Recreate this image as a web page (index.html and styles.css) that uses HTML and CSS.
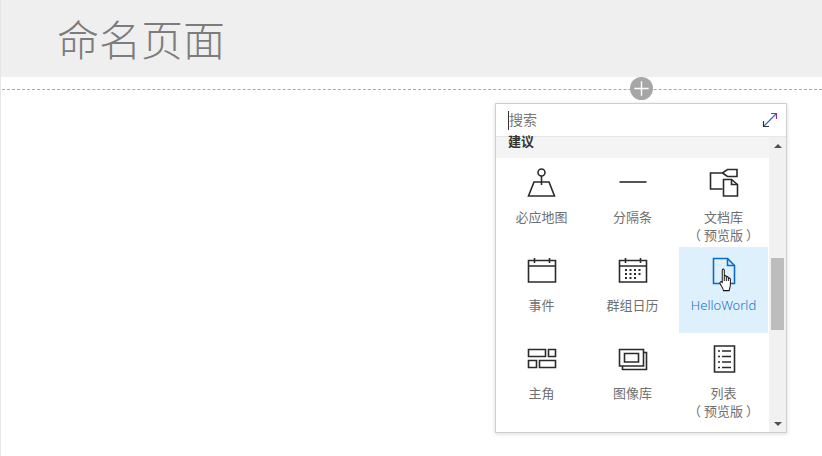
FILE: index.html
```html
<!DOCTYPE html>
<html lang="zh-CN">
<head>
    <meta charset="UTF-8">
    <meta name="viewport" content="width=device-width, initial-scale=1.0">
    <title>命名页面</title>
    <link rel="stylesheet" href="styles.css">
</head>
<body>
    <div class="page">
        <header class="page-header">
            <h1>命名页面</h1>
        </header>
        <div class="divider"></div>
    </div>

    <button class="add-btn" aria-label="添加">
        <svg width="24" height="24" viewBox="0 0 24 24"><path d="M12 4.500v15M4.500 12h15"/></svg>
    </button>

    <div class="picker">
        <div class="picker-search">
            <span class="caret"></span>
            <span class="search-text">搜索</span>
            <svg class="expand" width="16" height="16" viewBox="0 0 16 16">
                <path class="ic-blue" d="M1.500 14.500 14.500 1.500"/>
                <path class="ic-purple" d="M9 1.500h5.500V7"/>
                <path class="ic" d="M1.500 9v5.500H7"/>
            </svg>
        </div>
        <div class="picker-body">
            <div class="picker-list">
                <div class="section-title">建议</div>
                <div class="grid">
                    <div class="cell">
                        <svg class="icon" width="32" height="32" viewBox="0 0 32 32">
                            <circle cx="15.500" cy="6.500" r="3.500"/>
                            <path d="M15.500 10V19M8 16h15L28.500 30H2.500z"/>
                        </svg>
                        <span>必应地图</span>
                    </div>
                    <div class="cell">
                        <svg class="icon" width="32" height="32" viewBox="0 0 32 32">
                            <path d="M2.500 16h27"/>
                        </svg>
                        <span>分隔条</span>
                    </div>
                    <div class="cell">
                        <svg class="icon" width="32" height="32" viewBox="0 0 32 32">
                            <path d="M14.500 23H2.500V7h12l5-3.500H29v7H19.500l-5-3.500"/>
                            <path d="M15.500 13.500h8l6 5V30h-14z"/>
                            <path d="M23.500 13.500v5h6"/>
                        </svg>
                        <span class="two-line">文档库<br>（ 预览版 ）</span>
                    </div>
                    <div class="cell cell-mid">
                        <svg class="icon" width="32" height="32" viewBox="0 0 32 32">
                            <path d="M2.500 5.500h27v21.500h-27zM2.500 11h27M8.500 3v5M23.500 3v5"/>
                        </svg>
                        <span>事件</span>
                    </div>
                    <div class="cell cell-mid">
                        <svg class="icon" width="32" height="32" viewBox="0 0 32 32">
                            <path d="M2.500 5.500h27v21.500h-27zM2.500 11h27M8.500 3v5M23.500 3v5"/>
                            <path class="dots" d="M8 15h17M8 19h17M8 23h12"/>
                        </svg>
                        <span>群组日历</span>
                    </div>
                    <div class="cell cell-mid cell-active">
                        <svg class="icon" width="32" height="32" viewBox="0 0 32 32">
                            <path d="M5.500 3.500h14l7 7v18h-21z"/>
                            <path d="M19.500 3.500v7h7"/>
                        </svg>
                        <span>HelloWorld</span>
                        <svg class="hand" width="13" height="24" viewBox="0 0 16 25" preserveAspectRatio="none">
                            <path d="M4 2.500c0-2 2.500-2 2.500 0V9c.3-1.500 2.500-1.500 2.500 0v1c.3-1.300 2.400-1.300 2.500.2v1c.4-1 2.500-1 2.500.6V17c0 3-1 4-1.500 6.500H5.500C5 21 3 19 1.500 16.500c-1-1.800.8-3.200 2.500-1.500z"/>
                            <path d="M6.500 9v4.500M9 10v3.500M11.500 11v2.500"/>
                        </svg>
                    </div>
                    <div class="cell cell-low">
                        <svg class="icon" width="32" height="32" viewBox="0 0 32 32">
                            <path d="M2.500 8.500h17v7h-17zM22.500 8.500h7v7h-7zM2.500 19.500h8v7h-8zM13.500 19.500h16v7h-16z"/>
                        </svg>
                        <span>主角</span>
                    </div>
                    <div class="cell cell-low">
                        <svg class="icon" width="32" height="32" viewBox="0 0 32 32">
                            <path d="M2.500 8.500h24v16.500h-24zM7.500 12.500h14v8.500h-14z"/>
                            <path d="M26.500 11.500h3v17h-24v-3.500"/>
                        </svg>
                        <span>图像库</span>
                    </div>
                    <div class="cell cell-low">
                        <svg class="icon" width="32" height="32" viewBox="0 0 32 32">
                            <path d="M6.500 5h20v26h-20z"/>
                            <path d="M10 10h2M14 10h9M10 15.500h2M14 15.500h9M10 21h2M14 21h9M10 26.500h2M14 26.500h9"/>
                        </svg>
                        <span class="two-line">列表<br>（ 预览版 ）</span>
                    </div>
                </div>
            </div>
            <div class="scrollbar">
                <span class="arrow arrow-up"></span>
                <div class="track"><div class="thumb"></div></div>
                <span class="arrow arrow-down"></span>
            </div>
        </div>
    </div>
</body>
</html>
```

FILE: styles.css
```css
body {
    margin: 0;
    height: 456px;
    overflow: hidden;
    background: white;
    font-family: "Noto Sans CJK SC", "Noto Sans", sans-serif;
}
.page {
    height: 456px;
    border-left: 1px solid #e6e6e6;
}
.page-header {
    height: 77px;
    background-color: #efefef;
    padding-left: 56px;
}
.page-header h1 {
    margin: 0;
    font-size: 42px;
    font-weight: 300;
    line-height: 75px;
    color: #7c7c7c;
}
.divider {
    margin: 12px 0 0 1px;
    border-top: 1px dashed #aaa;
}
.add-btn {
    position: absolute;
    left: 630px;
    top: 77px;
    width: 23px;
    height: 23px;
    padding: 0;
    border: none;
    border-radius: 50%;
    background-color: #a6a6a6;
}
.add-btn svg {
    display: block;
    width: 23px;
    height: 23px;
    fill: none;
    stroke: white;
    stroke-width: 1.5;
}

.picker {
    position: absolute;
    left: 495px;
    top: 103px;
    width: 290px;
    height: 328px;
    border: 1px solid #cfcfcf;
    background: white;
    box-shadow: 0 1px 4px rgba(0,0,0,0.15);
    display: flex;
    flex-direction: column;
}
.picker-search {
    height: 32px;
    flex: none;
    display: flex;
    align-items: center;
    padding: 0 8px 0 12px;
    border-bottom: 1px solid #e6e6e6;
}
.caret {
    width: 1px;
    height: 19px;
    background-color: #333;
}
.search-text {
    font-size: 14px;
    line-height: 18px;
    margin-top: -2px;
    color: #777;
}
.expand {
    margin-left: auto;
    fill: none;
    stroke-width: 1.2;
}
.ic { stroke: #333; }
.ic-blue { stroke: #3a6fb5; }
.ic-purple { stroke: #8a2f9a; }

.picker-body {
    flex: 1;
    display: flex;
    min-height: 0;
}
.picker-list {
    flex: 1;
}
.section-title {
    height: 21px;
    padding-left: 12px;
    background-color: #f4f4f4;
    font-size: 13px;
    font-weight: bold;
    line-height: 7px;
    color: #333;
}
.grid {
    display: grid;
    grid-template-columns: repeat(3, 89px);
    grid-template-rows: 89px 86px 100px;
    column-gap: 2px;
    padding-left: 1px;
}
.cell {
    position: relative;
    display: flex;
    flex-direction: column;
    align-items: center;
    padding-top: 8px;
    font-size: 13px;
    line-height: 18px;
    color: #707070;
    text-align: center;
}
.two-line {
    line-height: 17.5px;
}
.cell-active {
    background-color: #dff0fd;
    color: #1a70cc;
    font-family: "Noto Sans", sans-serif;
    font-weight: 300;
}
.icon {
    flex: none;
    margin-bottom: 10px;
    fill: none;
    stroke: #2b2b2b;
    stroke-width: 1.6;
}
.cell-mid .icon {
    margin-bottom: 9px;
}
.cell-low .icon {
    margin-bottom: 11px;
}
.icon .dots {
    stroke-width: 2;
    stroke-dasharray: 2 2.500;
}
.cell-active .icon {
    stroke: #0b6cc4;
}
.hand {
    position: absolute;
    left: 40px;
    top: 21px;
    fill: white;
    stroke: #111;
    stroke-width: 1.2;
}

.scrollbar {
    width: 17px;
    flex: none;
    background-color: #f1f1f1;
    display: flex;
    flex-direction: column;
    align-items: center;
}
.arrow {
    flex: none;
    width: 0;
    height: 0;
    border-left: 4px solid transparent;
    border-right: 4px solid transparent;
}
.arrow-up {
    margin: 7px 0 5px;
    border-bottom: 4px solid #505050;
}
.arrow-down {
    margin: 5px 0 6px;
    border-top: 4px solid #505050;
}
.track {
    flex: 1;
    width: 100%;
    padding-top: 105px;
}
.thumb {
    width: 13px;
    height: 72px;
    margin-left: 2px;
    background-color: #bdbdbd;
}
```
